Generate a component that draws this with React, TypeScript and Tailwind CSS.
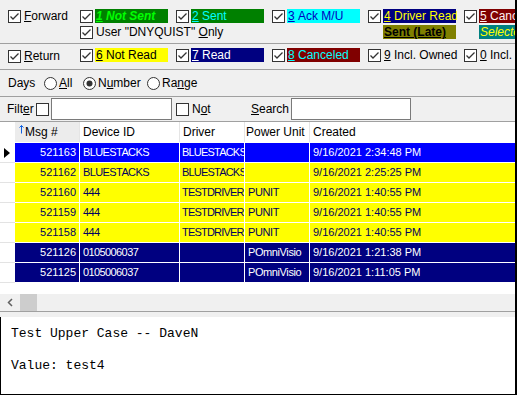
import React from "react";

type Row = {
  id: string;
  device: string;
  driver: string;
  unit: string;
  created: string;
  tone: "blue" | "yellow" | "navy";
};

const rows: Row[] = [
  { id: "521163", device: "BLUESTACKS", driver: "BLUESTACKS", unit: "", created: "9/16/2021 2:34:48 PM", tone: "blue" },
  { id: "521162", device: "BLUESTACKS", driver: "BLUESTACKS", unit: "", created: "9/16/2021 2:25:25 PM", tone: "yellow" },
  { id: "521160", device: "444", driver: "TESTDRIVER", unit: "PUNIT", created: "9/16/2021 1:40:55 PM", tone: "yellow" },
  { id: "521159", device: "444", driver: "TESTDRIVER", unit: "PUNIT", created: "9/16/2021 1:40:55 PM", tone: "yellow" },
  { id: "521158", device: "444", driver: "TESTDRIVER", unit: "PUNIT", created: "9/16/2021 1:40:55 PM", tone: "yellow" },
  { id: "521126", device: "0105006037", driver: "", unit: "POmniVisio", created: "9/16/2021 1:21:38 PM", tone: "navy" },
  { id: "521125", device: "0105006037", driver: "", unit: "POmniVisio", created: "9/16/2021 1:11:05 PM", tone: "navy" },
];

const toneClass = {
  blue: "bg-[#0000ff] text-white",
  yellow: "bg-[#ffff00] text-[#000060]",
  navy: "bg-[#000080] text-white",
};

const Check = ({ checked = true }: { checked?: boolean }) => (
  <svg width="13" height="13" viewBox="0 0 13 13" className="shrink-0">
    <rect x="0.5" y="0.5" width="12" height="12" fill="#ffffff" stroke="#333333" />
    {checked && <path d="M2.5 6.5L5 9l5.5-5.5" fill="none" stroke="#333333" strokeWidth="1.3" />}
  </svg>
);

const Radio = ({ on = false }: { on?: boolean }) => (
  <svg width="13" height="13" viewBox="0 0 13 13" className="shrink-0">
    <circle cx="6.5" cy="6.5" r="6" fill="#ffffff" stroke="#333333" />
    {on && <circle cx="6.5" cy="6.5" r="3" fill="#333333" />}
  </svg>
);

const Tag = ({ className, children }: { className: string; children: React.ReactNode }) => (
  <span className={`flex h-[14px] w-[73px] shrink-0 items-center pl-[1px] leading-none ${className}`}>{children}</span>
);

const Line = ({ children }: { children: React.ReactNode }) => (
  <div className="flex h-[14px] items-center gap-[2px] whitespace-nowrap">{children}</div>
);

const Col = ({ children, top = "pt-[9px]" }: { children: React.ReactNode; top?: string }) => (
  <div className={`flex w-[96px] shrink-0 flex-col gap-[2px] ${top}`}>{children}</div>
);

export default function App() {
  return (
    <div className="flex h-[395px] w-[517px] flex-col overflow-hidden border-r-2 border-black bg-[#f0f0f0] font-['Liberation_Sans',Arial,sans-serif] text-[12px] text-black">
      {/* status filters */}
      <div className="flex h-[44px] shrink-0 border-b border-[#a0a0a0]">
        <div className="w-[80px] shrink-0 pl-[8px] pt-[9px]">
          <div className="flex h-[14px] items-center gap-[3px]">
            <Check />
            <span><u>F</u>orward</span>
          </div>
        </div>
        <Col>
          <Line>
            <Check />
            <Tag className="bg-[#008000] font-bold italic text-[#00ff00]"><u>1</u>&nbsp;Not Sent</Tag>
          </Line>
          <Line>
            <Check />
            <span className="pl-[1px]">User "DNYQUIST" <u>O</u>nly</span>
          </Line>
        </Col>
        <Col>
          <Line>
            <Check />
            <Tag className="bg-[#008000] text-[#00ffff]"><u>2</u>&nbsp;Sent</Tag>
          </Line>
        </Col>
        <Col>
          <Line>
            <Check />
            <Tag className="bg-[#00ffff] text-[#0000c0]"><u>3</u>&nbsp;Ack M/U</Tag>
          </Line>
        </Col>
        <Col>
          <Line>
            <Check />
            <Tag className="bg-[#000080] text-[#ffff00]"><u>4</u>&nbsp;Driver Read</Tag>
          </Line>
          <Line>
            <span className="w-[13px]" />
            <Tag className="bg-[#808000] font-bold text-black"><u>Sent (Late)</u></Tag>
          </Line>
        </Col>
        <Col>
          <Line>
            <Check />
            <Tag className="bg-[#800000] text-[#fff0f0]"><u>5</u>&nbsp;Canceled</Tag>
          </Line>
          <Line>
            <span className="w-[13px]" />
            <Tag className="bg-[#008080] italic text-[#ffff00]">Selected</Tag>
          </Line>
        </Col>
      </div>

      {/* return filters */}
      <div className="flex h-[26px] shrink-0 border-b border-[#a0a0a0]">
        <div className="w-[80px] shrink-0 pl-[8px] pt-[5px]">
          <div className="flex h-[14px] items-center gap-[3px]">
            <Check />
            <span><u>R</u>eturn</span>
          </div>
        </div>
        <Col top="pt-[4px]">
          <Line>
            <Check />
            <Tag className="bg-[#ffff00] text-black"><u>6</u>&nbsp;Not Read</Tag>
          </Line>
        </Col>
        <Col top="pt-[4px]">
          <Line>
            <Check />
            <Tag className="bg-[#000080] text-white"><u>7</u>&nbsp;Read</Tag>
          </Line>
        </Col>
        <Col top="pt-[4px]">
          <Line>
            <Check />
            <Tag className="bg-[#800000] text-[#00ffff]"><u>8</u>&nbsp;Canceled</Tag>
          </Line>
        </Col>
        <Col top="pt-[4px]">
          <Line>
            <Check />
            <span className="pl-[1px]"><u>9</u> Incl. Owned</span>
          </Line>
        </Col>
        <Col top="pt-[4px]">
          <Line>
            <Check />
            <span className="pl-[1px]"><u>0</u> Incl. Mine</span>
          </Line>
        </Col>
      </div>

      {/* days */}
      <div className="flex h-[27px] shrink-0 items-center border-b border-[#a0a0a0] pl-[8px]">
        <span className="w-[36px]">Days</span>
        <Radio />
        <span className="ml-[2px] w-[24px]"><u>A</u>ll</span>
        <Radio on />
        <span className="ml-[2px] w-[49px]">N<u>u</u>mber</span>
        <Radio />
        <span className="ml-[2px]">Ra<u>n</u>ge</span>
      </div>

      {/* filter */}
      <div className="flex h-[25px] shrink-0 items-center border-b border-[#a0a0a0] pl-[7px]">
        <span className="w-[29px]">Filt<u>e</u>r</span>
        <Check checked={false} />
        <div className="ml-[2px] h-[22px] w-[121px] border border-[#7a7a7a] bg-white" />
        <span className="ml-[4px]"><Check checked={false} /></span>
        <span className="ml-[3px] w-[59px]">N<u>o</u>t</span>
        <span className="w-[40px]"><u>S</u>earch</span>
        <div className="h-[22px] w-[120px] border border-[#7a7a7a] bg-white" />
      </div>

      {/* grid */}
      <div className="flex h-[172px] shrink-0 flex-col overflow-hidden bg-white text-[11px]">
        <div className="flex h-[21px] shrink-0 border-b border-white text-[12px]">
          <div className="w-[15px] shrink-0" />
          <div className="flex w-[65px] shrink-0 items-center border-r border-[#e5e5e5] bg-[#ececec] pl-[4px]">
            <svg width="5" height="9" viewBox="0 0 5 9" className="mb-[6px] mr-[1px]">
              <path d="M2.5 0.5v8M0.5 2.5l2-2 2 2" fill="none" stroke="#1060e0" strokeWidth="1" />
            </svg>
            Msg #
          </div>
          <div className="flex w-[100px] shrink-0 items-center border-r border-[#e5e5e5] pl-[3px]">Device ID</div>
          <div className="flex w-[65px] shrink-0 items-center border-r border-[#e5e5e5] pl-[3px]">Driver</div>
          <div className="flex w-[65px] shrink-0 items-center overflow-hidden whitespace-nowrap border-r border-[#e5e5e5] pl-[1px]">Power Unit</div>
          <div className="flex flex-1 items-center pl-[3px]">Created</div>
        </div>
        {rows.map((r, i) => (
          <div key={r.id} className="flex h-[20px] shrink-0">
            <div className="flex w-[15px] shrink-0 items-center border-b border-[#e3e3e3] pl-[4px]">
              {i === 0 && (
                <svg width="6" height="10" viewBox="0 0 6 10">
                  <path d="M0 0l6 5-6 5z" fill="#000000" />
                </svg>
              )}
            </div>
            <div className={`flex flex-1 border-b border-white ${toneClass[r.tone]}`}>
              <div className="flex w-[65px] shrink-0 items-center justify-end border-r border-white pr-[3px]">{r.id}</div>
              <div className="flex w-[100px] shrink-0 items-center border-r border-white pl-[3px] tracking-[-0.6px]">{r.device}</div>
              <div className="flex w-[65px] shrink-0 items-center overflow-hidden whitespace-nowrap border-r border-white pl-[2px] tracking-[-0.8px]">{r.driver}</div>
              <div className="flex w-[65px] shrink-0 items-center overflow-hidden whitespace-nowrap border-r border-white pl-[3px] tracking-[-0.4px]">{r.unit}</div>
              <div className="flex flex-1 items-center pl-[3px]">{r.created}</div>
            </div>
          </div>
        ))}
      </div>

      {/* horizontal scrollbar */}
      <div className="flex h-[18px] shrink-0 items-center border-b border-[#a0a0a0] bg-[#f0f0f0]">
        <svg width="20" height="17" viewBox="0 0 20 17" className="shrink-0">
          <path d="M12 5l-3.5 3.5L12 12" fill="none" stroke="#606060" strokeWidth="1.5" />
        </svg>
        <div className="h-[17px] w-[17px] bg-[#cdcdcd]" />
      </div>
      <div className="h-[5px] shrink-0" />

      {/* message text */}
      <div className="h-[78px] shrink-0 whitespace-pre border-b border-l border-black bg-white pl-[10px] pt-[9px] font-['Liberation_Mono','Courier_New',monospace] text-[13px] leading-[16px] text-black">
        {"Test Upper Case -- DaveN\n\nValue: test4"}
      </div>
    </div>
  );
}
